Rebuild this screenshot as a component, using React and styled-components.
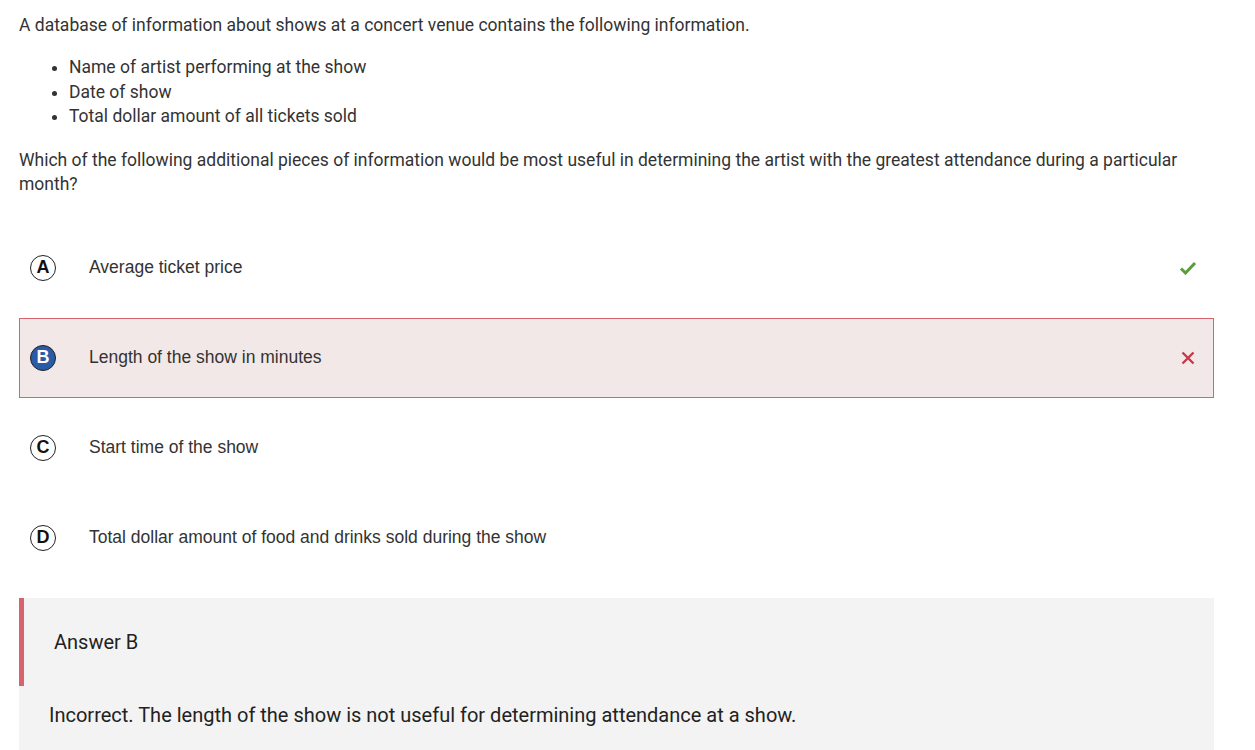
import React from 'react';
import styled, { createGlobalStyle } from 'styled-components';

const GlobalStyle = createGlobalStyle`
    body {
        margin: 0;
        background: #ffffff;
        font-family: Roboto, "Liberation Sans", sans-serif;
        color: #333333;
    }
`;

const Page = styled.main`
    width: 1195px;
    padding: 13px 0 0 19px;
`;

const Stem = styled.p`
    margin: 0;
    font-size: 17.5px;
    line-height: 24px;
`;

const BulletList = styled.ul`
    margin: 18px 0 19px 0;
    padding-left: 50px;
    font-size: 17.5px;
    line-height: 24.5px;
`;

const OptionList = styled.ul`
    list-style: none;
    margin: 32px 0 0 0;
    padding: 0;
    display: flex;
    flex-direction: column;
    gap: 10px;
`;

const OptionRow = styled.li`
    display: flex;
    align-items: center;
    height: 80px;
    box-sizing: border-box;
    padding: 0 16px 0 10px;
    border: 1px solid ${p => (p.$wrong ? '#d6636d' : 'transparent')};
    background: ${p => (p.$wrong ? '#f3e8e8' : 'transparent')};
    font-family: "Liberation Sans", Arial, sans-serif;
    font-size: 17.5px;
    color: #333333;
`;

const Letter = styled.span`
    width: 26px;
    height: 26px;
    box-sizing: border-box;
    border-radius: 50%;
    border: 1.5px solid #222222;
    background: ${p => (p.$selected ? '#2a5ba6' : '#ffffff')};
    color: ${p => (p.$selected ? '#ffffff' : '#111111')};
    display: flex;
    align-items: center;
    justify-content: center;
    font-family: "Liberation Sans", Arial, sans-serif;
    font-weight: bold;
    font-size: 18px;
    flex-shrink: 0;
`;

const OptionText = styled.span`
    flex: 1;
    margin-left: 33px;
`;

const Mark = styled.span`
    width: 18px;
    display: flex;
    justify-content: center;
`;

const AnswerBox = styled.section`
    margin-top: 20px;
    background: #f3f3f3;
    height: 160px;
`;

const AnswerHead = styled.div`
    border-left: 5px solid #d6636d;
    height: 88px;
    display: flex;
    align-items: center;
    padding-left: 30px;
    font-size: 20px;
    color: #222222;
`;

const Feedback = styled.p`
    margin: 17px 0 0 30px;
    font-size: 20px;
    color: #222222;
`;

const Check = () => (
    <svg width="18" height="14" viewBox="0 0 18 14">
        <path d="M2 7.5 L6.5 12 L16 2" fill="none" stroke="#5a9e3c" strokeWidth="3" />
    </svg>
);

const Cross = () => (
    <svg width="14" height="14" viewBox="0 0 14 14">
        <path d="M1.5 1.5 L12.5 12.5 M12.5 1.5 L1.5 12.5" fill="none" stroke="#c43a4a" strokeWidth="2.4" />
    </svg>
);

const OPTIONS = [
    { key: 'A', text: 'Average ticket price', mark: 'check' },
    { key: 'B', text: 'Length of the show in minutes', mark: 'cross', selected: true },
    { key: 'C', text: 'Start time of the show' },
    { key: 'D', text: 'Total dollar amount of food and drinks sold during the show' },
];

const App = () => {
  return (
    <Page>
        <GlobalStyle />
        <Stem>A database of information about shows at a concert venue contains the following information.</Stem>
        <BulletList>
            <li>Name of artist performing at the show</li>
            <li>Date of show</li>
            <li>Total dollar amount of all tickets sold</li>
        </BulletList>
        <Stem>Which of the following additional pieces of information would be most useful in determining the artist with the greatest attendance during a particular month?</Stem>
        <OptionList>
            {OPTIONS.map(o => (
                <OptionRow key={o.key} $wrong={o.selected}>
                    <Letter $selected={o.selected}>{o.key}</Letter>
                    <OptionText>{o.text}</OptionText>
                    <Mark>
                        {o.mark === 'check' && <Check />}
                        {o.mark === 'cross' && <Cross />}
                    </Mark>
                </OptionRow>
            ))}
        </OptionList>
        <AnswerBox>
            <AnswerHead>Answer B</AnswerHead>
            <Feedback>Incorrect. The length of the show is not useful for determining attendance at a show.</Feedback>
        </AnswerBox>
    </Page>
  )
}

export default App
